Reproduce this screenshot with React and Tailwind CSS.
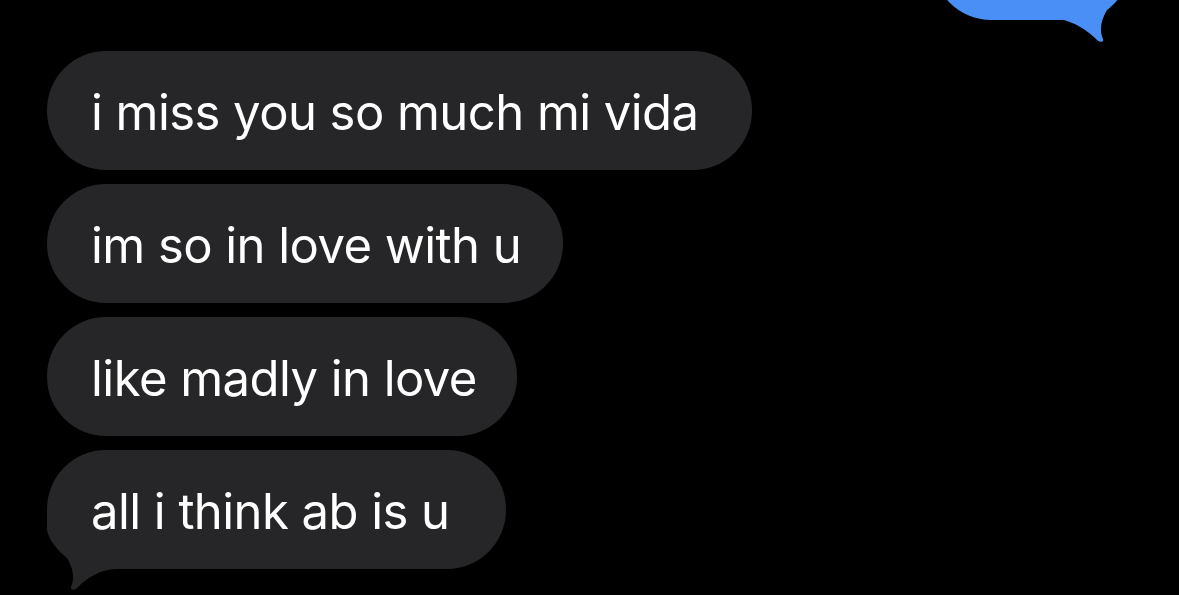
import React from "react";

const messages = [
  { text: "i miss you so much mi vida", width: "w-[705px]" },
  { text: "im so in love with u", width: "w-[516px]" },
  { text: "like madly in love", width: "w-[470px]" },
  { text: "all i think ab is u", width: "w-[459px]", tail: true },
];

function GrayTail() {
  return (
    <svg
      className="absolute left-0 top-[60px]"
      width="80"
      height="82"
      viewBox="0 0 80 82"
    >
      <path
        d="M0 0 H70 V59 H68 C52 60 40 68 30 78 C27 81 23 80 24 77 C28 68 26 58 20 48 C10 40 2 30 0 20 Z"
        fill="#262629"
      />
    </svg>
  );
}

function BlueTail() {
  return (
    <svg
      className="absolute right-[-14px] bottom-[-24px]"
      width="80"
      height="82"
      viewBox="0 0 80 82"
    >
      <path
        d="M76 0 H6 V57 H8 C24 60 36 68 46 78 C49 81 53 80 52 77 C48 68 50 58 56 48 C66 40 74 30 76 20 Z"
        fill="#4a8ff5"
      />
    </svg>
  );
}

function Bubble({ text, width, tail }) {
  return (
    <div
      className={`relative flex h-[119px] items-center rounded-[59px] bg-[#262629] pl-[44px] ${width}`}
    >
      {tail && <GrayTail />}
      <span className="relative whitespace-nowrap pt-[3px] text-[49px] leading-none tracking-[-0.55px] text-white">
        {text}
      </span>
    </div>
  );
}

export default function App() {
  return (
    <div
      className="relative h-[595px] w-[1179px] overflow-hidden bg-black"
      style={{ fontFamily: "Inter, 'Liberation Sans', sans-serif" }}
    >
      <div className="flex justify-end pr-[62px]">
        <div className="relative -mt-[99px] h-[119px] w-[184px] rounded-[58px] bg-[#4a8ff5]">
          <BlueTail />
        </div>
      </div>
      <div className="mt-[31px] flex flex-col gap-[14px] pl-[47px]">
        {messages.map((m) => (
          <Bubble key={m.text} {...m} />
        ))}
      </div>
    </div>
  );
}
